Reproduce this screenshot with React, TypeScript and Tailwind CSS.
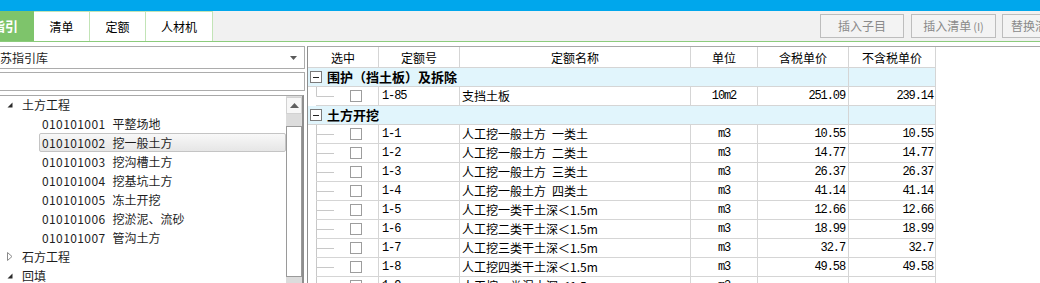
import React from "react";

const line = "border-[#d5d5d5]";
const mono = "font-['Liberation_Mono',monospace] text-[12px] tracking-[-1.1px]";

type TreeItem = { lv: 0; open: boolean; text: string } | { lv: 1; code: string; text: string; sel?: boolean };

const tree: TreeItem[] = [
  { lv: 0, open: true, text: "土方工程" },
  { lv: 1, code: "010101001", text: "平整场地" },
  { lv: 1, code: "010101002", text: "挖一般土方", sel: true },
  { lv: 1, code: "010101003", text: "挖沟槽土方" },
  { lv: 1, code: "010101004", text: "挖基坑土方" },
  { lv: 1, code: "010101005", text: "冻土开挖" },
  { lv: 1, code: "010101006", text: "挖淤泥、流砂" },
  { lv: 1, code: "010101007", text: "管沟土方" },
  { lv: 0, open: false, text: "石方工程" },
  { lv: 0, open: true, text: "回填" },
];

type Row =
  | { g: string }
  | { code: string; name: string; unit: string; tax: string; net: string; last?: boolean };

const rows: Row[] = [
  { g: "围护（挡土板）及拆除" },
  { code: "1-85", name: "支挡土板", unit: "10m2", tax: "251.09", net: "239.14", last: true },
  { g: "土方开挖" },
  { code: "1-1", name: "人工挖一般土方\u2002一类土", unit: "m3", tax: "10.55", net: "10.55" },
  { code: "1-2", name: "人工挖一般土方\u2002二类土", unit: "m3", tax: "14.77", net: "14.77" },
  { code: "1-3", name: "人工挖一般土方\u2002三类土", unit: "m3", tax: "26.37", net: "26.37" },
  { code: "1-4", name: "人工挖一般土方\u2002四类土", unit: "m3", tax: "41.14", net: "41.14" },
  { code: "1-5", name: "人工挖一类干土深＜1.5m", unit: "m3", tax: "12.66", net: "12.66" },
  { code: "1-6", name: "人工挖二类干土深＜1.5m", unit: "m3", tax: "18.99", net: "18.99" },
  { code: "1-7", name: "人工挖三类干土深＜1.5m", unit: "m3", tax: "32.7", net: "32.7" },
  { code: "1-8", name: "人工挖四类干土深＜1.5m", unit: "m3", tax: "49.58", net: "49.58" },
  { code: "1-9", name: "人工挖一类湿土深＜1.5m", unit: "m3", tax: "", net: "" },
];

const heads = ["选中", "定额号", "定额名称", "单位", "含税单价", "不含税单价"];
const W = ["w-[71px]", "w-[81px]", "w-[231px]", "w-[67px]", "w-[91px]", "w-[87px]"];

function Tri({ open }: { open: boolean }) {
  return open ? (
    <svg width="6" height="6" viewBox="0 0 6 6" className="shrink-0">
      <path d="M5.5 0.5V5.5H0.5Z" fill="#2b2b2b" />
    </svg>
  ) : (
    <svg width="6" height="9" viewBox="0 0 6 9" className="shrink-0">
      <path d="M0.5 0.5L5 4.5L0.5 8.5Z" fill="none" stroke="#8a8a8a" />
    </svg>
  );
}

export default function App() {
  return (
    <div className="w-[1040px] h-[283px] overflow-hidden bg-white font-['Noto_Sans_CJK_SC',sans-serif] text-[12px] text-black flex flex-col">
      <div className="h-[11px] shrink-0 bg-[#00a7ec]" />

      {/* tab bar */}
      <div className="h-[31px] shrink-0 bg-[#f1f1f1] border-b border-[#8ccb7c] flex items-stretch overflow-hidden">
        <div className="-ml-[50px] w-[84px] shrink-0 bg-[#7ec46b] text-white font-bold text-[13px] flex items-center justify-center">清单指引</div>
        <div className="w-[56px] shrink-0 bg-white border-r border-t border-[#c2e4b6] flex items-center justify-center">清单</div>
        <div className="w-[56px] shrink-0 bg-white border-r border-t border-[#c2e4b6] flex items-center justify-center">定额</div>
        <div className="w-[67px] shrink-0 bg-white border-r border-t border-[#c2e4b6] flex items-center justify-center">人材机</div>
        <div className="ml-[607px] pt-[3px] flex items-start gap-[7px] shrink-0 text-[#8a8a8a]">
          <div className="w-[84px] h-[24px] border border-[#bdbdbd] bg-[#f3f3f3] flex items-center justify-center">插入子目</div>
          <div className="w-[85px] h-[24px] border border-[#bdbdbd] bg-[#f3f3f3] flex items-center justify-center">
            插入清单<span className="text-[11px] ml-[2px]">(I)</span>
          </div>
          <div className="w-[84px] h-[24px] -ml-px border border-[#bdbdbd] bg-[#f3f3f3] flex items-center pl-[8px]">替换清单</div>
        </div>
      </div>

      <div className="flex-1 min-h-0 flex">
        {/* left panel */}
        <div className="-ml-[20px] w-[325px] shrink-0 flex flex-col pt-[4px] text-[#1e1e1e]">
          <div className="h-[23px] shrink-0 border border-[#acacac] bg-white flex items-center justify-between">
            <span className="pl-[7px]">江苏指引库</span>
            <svg width="7" height="4" viewBox="0 0 7 4" className="mr-[7px]">
              <path d="M0 0H7L3.5 4Z" fill="#5a5a5a" />
            </svg>
          </div>
          <div className="mt-[3px] h-[19px] shrink-0 border border-[#acacac] bg-white" />
          <div className="mt-[4px] flex-1 min-h-0 w-[324px] border-t border-r-2 border-t-[#a8a8a8] border-r-[#8e8e8e] flex">
            <div className="flex-1 -mt-px">
              {tree.map((t, i) =>
                t.lv === 0 ? (
                  <div key={i} className="h-[19px] flex items-center pl-[27px]">
                    <Tri open={t.open} />
                    <span className="ml-[9px]">{t.text}</span>
                  </div>
                ) : (
                  <div key={i} className="h-[19px] flex items-stretch pl-[59px]">
                    <div
                      className={`flex-1 flex items-center pl-[2px] rounded-[2px] border ${
                        t.sel ? "border-[#c4c4c4] bg-linear-to-b from-[#f8f8f8] to-[#e6e6e6]" : "border-transparent"
                      }`}
                    >
                      <span className="tracking-[0.4px]">{t.code}</span>
                      <span className="ml-[7px]">{t.text}</span>
                    </div>
                  </div>
                )
              )}
            </div>
            {/* scrollbar */}
            <div className="w-[16px] shrink-0 flex flex-col bg-[#dcdcdc]">
              <div className="h-[17px] mt-px border border-[#d2d2d2] bg-[#f7f7f7] flex items-center justify-center">
                <svg width="9" height="5" viewBox="0 0 9 5">
                  <path d="M4.5 0L9 5H0Z" fill="#606060" />
                </svg>
              </div>
              <div className="mt-[12px] h-[151px] border border-[#9a9a9a] bg-white" />
            </div>
          </div>
        </div>

        {/* right table */}
        <div className="flex-1 min-w-0 pt-[4px] pl-[2px] bg-white">
          <div className="border-l border-t border-l-[#8e8e8e] border-t-[#a8a8a8] h-full">
            <div className="flex h-[21px]">
              {heads.map((h, i) => (
                <div key={i} className={`${W[i]} shrink-0 border-r border-b ${line} flex items-center justify-center pt-px`}>
                  {h}
                </div>
              ))}
            </div>
            {rows.map((r, i) =>
              "g" in r ? (
                <div key={i} className="flex h-[19px] w-[628px] bg-[#e1f5fc]">
                  <div className={`w-[541px] shrink-0 border-r border-b ${line} flex items-center pl-[2px]`}>
                    <span className="w-[12px] h-[12px] border border-[#7b7b7b] bg-white flex items-center justify-center">
                      <span className="w-[6px] h-px bg-[#222]" />
                    </span>
                    <span className="ml-[5px] font-bold text-[13px]">{r.g}</span>
                  </div>
                  <div className={`w-[87px] shrink-0 border-r border-b ${line}`} />
                </div>
              ) : (
                <div key={i} className="flex h-[19px]">
                  <div className={`${W[0]} shrink-0 border-r ${line} flex`}>
                    <div className="w-[8px] shrink-0" />
                    <div className={`flex-1 border-b ${line} flex items-center`}>
                      <svg width="18" height="18" viewBox="0 0 18 18" className="shrink-0">
                        <path d={r.last ? "M0.5 0V9.5H18" : "M0.5 0V18M0.5 9.5H18"} stroke="#c8c8c8" fill="none" />
                      </svg>
                      <span className="ml-[16px] w-[12px] h-[12px] border border-[#9d9d9d] bg-white" />
                    </div>
                  </div>
                  <div className={`${W[1]} shrink-0 border-r border-b ${line} flex items-center pl-[3px] ${mono}`}>{r.code}</div>
                  <div className={`${W[2]} shrink-0 border-r border-b ${line} flex items-center pl-[2px]`}>{r.name}</div>
                  <div className={`${W[3]} shrink-0 border-r border-b ${line} flex items-center justify-center ${mono}`}>{r.unit}</div>
                  <div className={`${W[4]} shrink-0 border-r border-b ${line} flex items-center justify-end pr-[3px] ${mono}`}>{r.tax}</div>
                  <div className={`${W[5]} shrink-0 border-r border-b ${line} flex items-center justify-end pr-[2px] ${mono}`}>{r.net}</div>
                </div>
              )
            )}
          </div>
        </div>
      </div>
    </div>
  );
}
